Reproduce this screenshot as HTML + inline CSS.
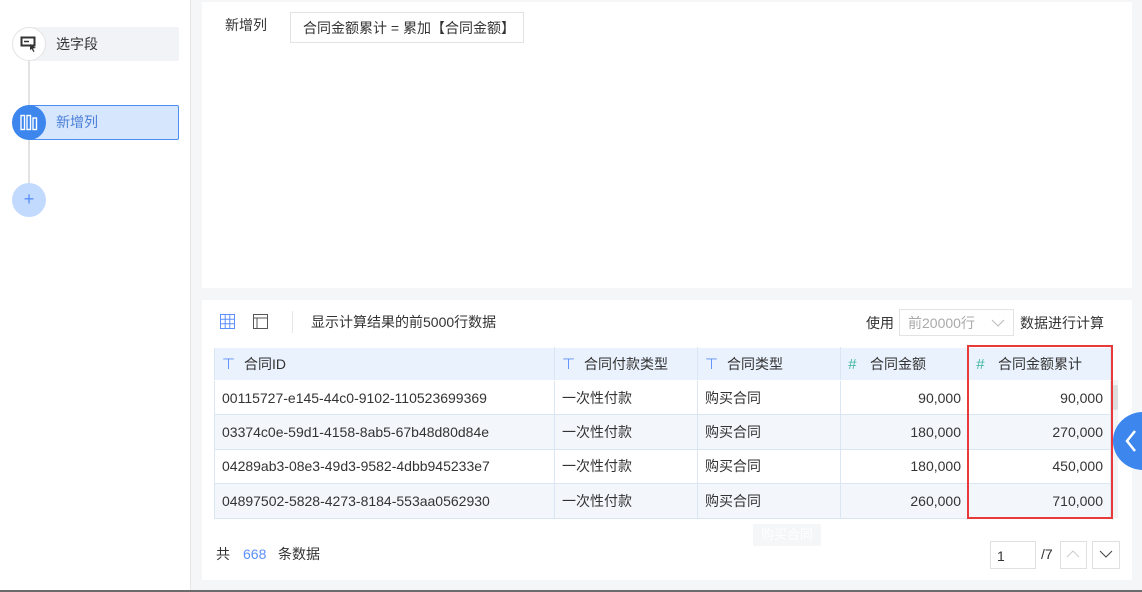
<!DOCTYPE html>
<html><head><meta charset="utf-8"><style>
*{box-sizing:border-box;margin:0;padding:0}
body{width:1142px;height:592px;overflow:hidden;background:#f5f6f8;font-family:"Liberation Sans","Noto Sans CJK SC",sans-serif;font-size:14px;line-height:18px;color:#333;position:relative}
.abs{position:absolute}
.left{left:0;top:0;width:191px;height:590px;background:#fff;border-right:1px solid #e6e6e6}
.bottomline{left:0;top:590px;width:1142px;height:2px;background:#6b6b6b}
.panel{background:#fff}
table{border-collapse:collapse;table-layout:fixed}
td,th{height:34.4px;border:1px solid #dbe6f5;font-weight:normal;font-size:14px;line-height:16px;padding:0 7px;white-space:nowrap;overflow:hidden;background:#fff}
th{background:#eaf2fd;text-align:left;border-color:#fff #dbe6f5;height:33px}
tr.alt td{background:#f3f7fc}
.r{text-align:right}
.ic{display:inline-block;width:22px;color:#5b8ff9;font-size:15px}
.ich{display:inline-block;width:22px;color:#3fb5a3;font-size:15px;font-style:italic}
.btn{border:1px solid #e0e0e0;background:#fff}
</style></head><body>
<div class="abs left"></div>
<div class="abs" style="left:28px;top:40px;width:2px;height:160px;background:#e3e3e3"></div>
<div class="abs" style="left:28px;top:27px;width:151px;height:34px;background:#f2f3f6;border-radius:2px"></div>
<div class="abs" style="left:12px;top:27px;width:34px;height:34px;border-radius:50%;background:#fff;border:1px solid #e3e3e3"></div>
<svg class="abs" style="left:20px;top:36px" width="18" height="16"><rect x="1.5" y="1.5" width="13" height="8" fill="none" stroke="#333" stroke-width="2"/><path d="M4 5.5h5" stroke="#333" stroke-width="1.5"/><path d="M10 8l6 4-3 .5 1.5 3-1.2.5-1.5-3L10 14z" fill="#333"/></svg>
<div class="abs" style="left:56px;top:35px">选字段</div>
<div class="abs" style="left:28px;top:105px;width:151px;height:35px;background:#d6e6fc;border:1px solid #4a8ef0;border-radius:2px"></div>
<div class="abs" style="left:12px;top:105px;width:34px;height:35px;border-radius:50%;background:#3c86ee"></div>
<svg class="abs" style="left:20px;top:114px" width="18" height="18"><rect x="1" y="1.5" width="3.5" height="14" fill="none" stroke="#fff" stroke-width="1.4"/><rect x="7" y="1.5" width="3.5" height="14" fill="none" stroke="#fff" stroke-width="1.4"/><rect x="13" y="4" width="3.5" height="11.5" fill="none" stroke="#fff" stroke-width="1.4"/></svg>
<div class="abs" style="left:56px;top:113px;color:#4a7fd8">新增列</div>
<div class="abs" style="left:12px;top:183px;width:34px;height:34px;border-radius:50%;background:#c2dafd;color:#5b8ff9;text-align:center;line-height:33px;font-size:18px">+</div>

<div class="abs panel" style="left:202px;top:2px;width:930px;height:286px"></div>
<div class="abs" style="left:225px;top:16px">新增列</div>
<div class="abs" style="left:290px;top:12px;width:234px;height:31px;border:1px solid #e3e3e3;padding:6px 0 0 12px;white-space:nowrap">合同金额累计 = 累加【合同金额】</div>

<div class="abs panel" style="left:202px;top:300px;width:930px;height:280px"></div>
<svg class="abs" style="left:220px;top:314px" width="16" height="16"><rect x=".5" y=".5" width="14" height="14" fill="none" stroke="#5b8ff9"/><path d="M.5 5.2h14M.5 9.8h14M5.2.5v14M9.8.5v14" stroke="#5b8ff9"/></svg>
<svg class="abs" style="left:253px;top:314px" width="16" height="16"><rect x=".5" y=".5" width="14" height="14" fill="none" stroke="#555"/><path d="M.5 4h14M4 4v10.5" stroke="#555"/></svg>
<div class="abs" style="left:292px;top:311px;width:1px;height:22px;background:#e6e6e6"></div>
<div class="abs" style="left:311px;top:313px">显示计算结果的前5000行数据</div>
<div class="abs" style="left:866px;top:314px">使用</div>
<div class="abs" style="left:899px;top:309px;width:115px;height:27px;border:1px solid #e3e3e3;padding:4px 0 0 8px;color:#aaa">前20000行</div>
<svg class="abs" style="left:991px;top:318px" width="14" height="10"><path d="M1 2l6 6 6-6" fill="none" stroke="#bbb"/></svg>
<div class="abs" style="left:1020px;top:314px">数据进行计算</div>

<div class="abs" style="left:1110px;top:380px;width:8px;height:138px;background:#f2f3f5"></div>
<table class="abs" style="left:214px;top:347px;width:896px">
<colgroup><col style="width:340px"><col style="width:143px"><col style="width:143px"><col style="width:128px"><col style="width:142px"></colgroup>
<tr><th><span class="ic">⊤</span>合同ID</th><th><span class="ic">⊤</span>合同付款类型</th><th><span class="ic">⊤</span>合同类型</th><th><span class="ich">#</span>合同金额</th><th><span class="ich">#</span>合同金额累计</th></tr>
<tr><td>00115727-e145-44c0-9102-110523699369</td><td>一次性付款</td><td>购买合同</td><td class="r">90,000</td><td class="r">90,000</td></tr>
<tr class="alt"><td>03374c0e-59d1-4158-8ab5-67b48d80d84e</td><td>一次性付款</td><td>购买合同</td><td class="r">180,000</td><td class="r">270,000</td></tr>
<tr><td>04289ab3-08e3-49d3-9582-4dbb945233e7</td><td>一次性付款</td><td>购买合同</td><td class="r">180,000</td><td class="r">450,000</td></tr>
<tr class="alt"><td>04897502-5828-4273-8184-553aa0562930</td><td>一次性付款</td><td>购买合同</td><td class="r">260,000</td><td class="r">710,000</td></tr>
</table>
<div class="abs" style="left:1113px;top:385px;width:5px;height:25px;background:#ddd;border-radius:2px"></div>
<div class="abs" style="left:967px;top:345px;width:146px;height:174px;border:2px solid #e83a3a"></div>
<div class="abs" style="left:1113px;top:412px;width:60px;height:58px;border-radius:50%;background:#3c86ee"></div>
<svg class="abs" style="left:1124px;top:429px" width="14" height="24"><path d="M11 2L3 12l8 10" fill="none" stroke="#fff" stroke-width="2.5"/></svg>
<div class="abs" style="left:753px;top:524px;width:68px;height:22px;background:#f5f6f8;border-radius:2px;color:#fff;text-align:center;line-height:22px;font-size:13px">购买合同</div>
<div class="abs" style="left:216px;top:545px">共</div>
<div class="abs" style="left:243px;top:545px;color:#5b8ff9">668</div>
<div class="abs" style="left:278px;top:545px">条数据</div>
<div class="abs btn" style="left:990px;top:541px;width:46px;height:28px;padding:5px 0 0 6px;font-size:14px">1</div>
<div class="abs" style="left:1041px;top:545px">/7</div>
<div class="abs btn" style="left:1060px;top:541px;width:27px;height:28px"></div>
<svg class="abs" style="left:1066px;top:549px" width="14" height="10"><path d="M1 8l6-6 6 6" fill="none" stroke="#ccc"/></svg>
<div class="abs btn" style="left:1092px;top:541px;width:28px;height:28px"></div>
<svg class="abs" style="left:1099px;top:549px" width="14" height="10"><path d="M1 2l6 6 6-6" fill="none" stroke="#444"/></svg>
<div class="abs bottomline"></div>
</body></html>
